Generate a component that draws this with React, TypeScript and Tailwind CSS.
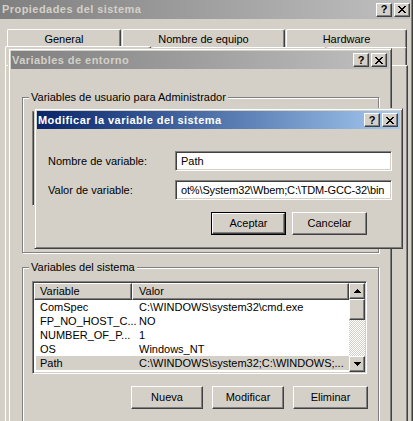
import React from 'react';

const raised =
  'border border-t-white border-l-white border-r-[#404040] border-b-[#404040] shadow-[inset_-1px_-1px_0_#808080]';
const sunken =
  'border border-t-[#808080] border-l-[#808080] border-r-white border-b-white shadow-[inset_1px_1px_0_#404040,inset_-1px_-1px_0_#d4d0c8]';
const winFrame =
  'border border-t-[#d4d0c8] border-l-[#d4d0c8] border-r-[#404040] border-b-[#404040] shadow-[inset_1px_1px_0_#fff,inset_-1px_-1px_0_#808080] p-[2px] bg-[#d4d0c8]';
const groupBox =
  'relative border border-[#808080] shadow-[inset_1px_1px_0_#fff,1px_1px_0_#fff]';

const CloseGlyph = () => (
  <svg width="8" height="7" viewBox="0 0 8 7" shapeRendering="crispEdges">
    <path
      d="M0 0h2v1H0zM6 0h2v1H6zM1 1h2v1H1zM5 1h2v1H5zM2 2h4v1H2zM3 3h2v1H3zM2 4h4v1H2zM1 5h2v1H1zM5 5h2v1H5zM0 6h2v1H0zM6 6h2v1H6z"
      fill="#000"
    />
  </svg>
);

const Arrow = ({ down }: { down?: boolean }) => (
  <svg width="7" height="4" viewBox="0 0 7 4" shapeRendering="crispEdges">
    <path
      d={down ? 'M0 0h7v1H0zM1 1h5v1H1zM2 2h3v1H2zM3 3h1v1H3z' : 'M3 0h1v1H3zM2 1h3v1H2zM1 2h5v1H1zM0 3h7v1H0z'}
      fill="#000"
    />
  </svg>
);

function CapButtons() {
  return (
    <div className="flex gap-[2px]">
      <div className={`flex h-[14px] w-[16px] items-center justify-center bg-[#d4d0c8] ${raised}`}>
        <span className="text-[11px] font-bold leading-none text-black">?</span>
      </div>
      <div className={`flex h-[14px] w-[16px] items-center justify-center bg-[#d4d0c8] ${raised}`}>
        <CloseGlyph />
      </div>
    </div>
  );
}

function TitleBar({ title, active }: { title: string; active?: boolean }) {
  return (
    <div
      className={`flex h-[18px] items-center justify-between pl-[1px] pr-[2px] bg-linear-to-r ${
        active ? 'from-[#0a246a] to-[#a6caf0] text-white' : 'from-[#808080] to-[#c0c0c0] text-[#d4d0c8]'
      }`}
    >
      <span className="text-[11px] font-bold tracking-[0.45px] whitespace-nowrap">{title}</span>
      <CapButtons />
    </div>
  );
}

function Btn({ label, w, isDefault }: { label: string; w: string; isDefault?: boolean }) {
  if (isDefault) {
    return (
      <div className={`h-[23px] ${w} border border-black`}>
        <div className={`flex h-full w-full items-center justify-center ${raised}`}>{label}</div>
      </div>
    );
  }
  return <div className={`flex h-[23px] ${w} items-center justify-center ${raised}`}>{label}</div>;
}

const rows = [
  { name: 'ComSpec', value: 'C:\\WINDOWS\\system32\\cmd.exe' },
  { name: 'FP_NO_HOST_C...', value: 'NO' },
  { name: 'NUMBER_OF_P...', value: '1' },
  { name: 'OS', value: 'Windows_NT' },
  { name: 'Path', value: 'C:\\WINDOWS\\system32;C:\\WINDOWS;...', selected: true },
];

function SystemList() {
  return (
    <div className={`ml-[9px] mt-[13px] flex h-[93px] w-[335px] bg-white p-[1px] ${sunken}`}>
      <div className="flex-1 overflow-hidden">
        <div className="flex h-[17px] bg-[#d4d0c8]">
          <div className={`flex w-[98px] items-center pl-[5px] ${raised}`}>Variable</div>
          <div className={`flex flex-1 items-center pl-[6px] ${raised}`}>Valor</div>
        </div>
        {rows.map((r) => (
          <div
            key={r.name}
            className={`flex h-[14px] items-center whitespace-nowrap ${r.selected ? 'ml-[2px] bg-[#d4d0c8]' : ''}`}
          >
            <div className={`${r.selected ? 'w-[96px] pl-[4px]' : 'w-[98px] pl-[6px]'}`}>{r.name}</div>
            <div className="pl-[7px]">{r.value}</div>
          </div>
        ))}
      </div>
      <div className="flex w-[16px] flex-col">
        <div className={`flex h-[16px] items-center justify-center bg-[#d4d0c8] ${raised}`}>
          <Arrow />
        </div>
        <div className={`h-[21px] bg-[#d4d0c8] ${raised}`} />
        <div className="flex-1 bg-[image:repeating-conic-gradient(#fff_0_25%,#d4d0c8_0_50%)] bg-[length:2px_2px]" />
        <div className={`flex h-[16px] items-center justify-center bg-[#d4d0c8] ${raised}`}>
          <Arrow down />
        </div>
      </div>
    </div>
  );
}

export default function App() {
  const tabTop =
    'absolute flex justify-center rounded-t-[2px] border-t border-l border-white border-r border-r-[#404040] bg-[#d4d0c8] shadow-[inset_-1px_0_0_#808080]';
  return (
    <div className="relative h-[421px] w-[413px] overflow-hidden bg-[#d4d0c8] font-['Liberation_Sans',Arial,sans-serif] text-[11px] leading-[13px] text-black">
      {/* Propiedades del sistema */}
      <div className={`absolute left-[-3px] top-[-3px] h-[440px] w-[416px] ${winFrame}`}>
        <div className="flex h-[19px] items-center justify-between bg-linear-to-r from-[#808080] to-[#c0c0c0] pl-[2px] text-[#d4d0c8]">
          <span className="text-[11px] font-bold tracking-[0.45px]">Propiedades del sistema</span>
          <CapButtons />
        </div>
        <div className="relative h-[420px]">
          <div className={`${tabTop} left-[7px] top-[10px] h-[20px] w-[114px] pt-[3px]`}>General</div>
          <div className={`${tabTop} left-[122px] top-[10px] h-[20px] w-[163px] pt-[3px]`}>Nombre de equipo</div>
          <div className={`${tabTop} left-[286px] top-[10px] h-[20px] w-[121px] pt-[3px]`}>Hardware</div>
          <div className={`${tabTop} left-[5px] top-[27px] h-[21px] w-[146px]`} />
          <div className={`${tabTop} left-[152px] top-[28px] h-[19px] w-[174px]`} />
          <div className={`${tabTop} left-[327px] top-[28px] h-[19px] w-[80px]`} />
          <div className="absolute left-[5px] top-[46px] h-[400px] w-[403px] border-t border-l border-white border-r border-r-[#404040] bg-[#d4d0c8] shadow-[inset_-1px_0_0_#808080]" />
        </div>
      </div>

      {/* Variables de entorno */}
      <div className={`absolute left-[8px] top-[48px] h-[400px] w-[384px] ${winFrame}`}>
        <TitleBar title="Variables de entorno" />
        <div className="pl-[11px] pr-[10px] pt-[28px]">
          <div className={`${groupBox} h-[156px]`}>
            <span className="absolute left-[6px] top-[-7px] bg-[#d4d0c8] px-[2px]">
              Variables de usuario para Administrador
            </span>
            <div className={`absolute left-[9px] top-[13px] h-[95px] w-[335px] bg-white ${sunken}`} />
          </div>
          <div className={`${groupBox} mt-[14px] h-[200px]`}>
            <span className="absolute left-[6px] top-[-7px] bg-[#d4d0c8] px-[2px]">Variables del sistema</span>
            <SystemList />
            <div className="ml-[108px] mt-[12px] flex gap-[9px]">
              <Btn label="Nueva" w="w-[72px]" />
              <Btn label="Modificar" w="w-[72px]" />
              <Btn label="Eliminar" w="w-[75px]" />
            </div>
          </div>
        </div>
      </div>

      {/* Modificar la variable del sistema */}
      <div className={`absolute left-[34px] top-[108px] h-[141px] w-[369px] ${winFrame}`}>
        <TitleBar title="Modificar la variable del sistema" active />
        <div className="pl-[11px]">
          <div className="mt-[22px] flex h-[20px] items-center">
            <div className="w-[127px]">Nombre de variable:</div>
            <div className={`flex h-[20px] w-[217px] items-center bg-white pl-[5px] ${sunken}`}>Path</div>
          </div>
          <div className="mt-[9px] flex h-[20px] items-center">
            <div className="w-[127px]">Valor de variable:</div>
            <div
              className={`flex h-[20px] w-[217px] items-center overflow-hidden whitespace-nowrap bg-white pl-[5px] tracking-[-0.15px] ${sunken}`}
            >
              ot%\System32\Wbem;C:\TDM-GCC-32\bin
            </div>
          </div>
          <div className="ml-[163px] mt-[12px] flex gap-[6px]">
            <Btn label="Aceptar" w="w-[75px]" isDefault />
            <Btn label="Cancelar" w="w-[75px]" />
          </div>
        </div>
      </div>
    </div>
  );
}
